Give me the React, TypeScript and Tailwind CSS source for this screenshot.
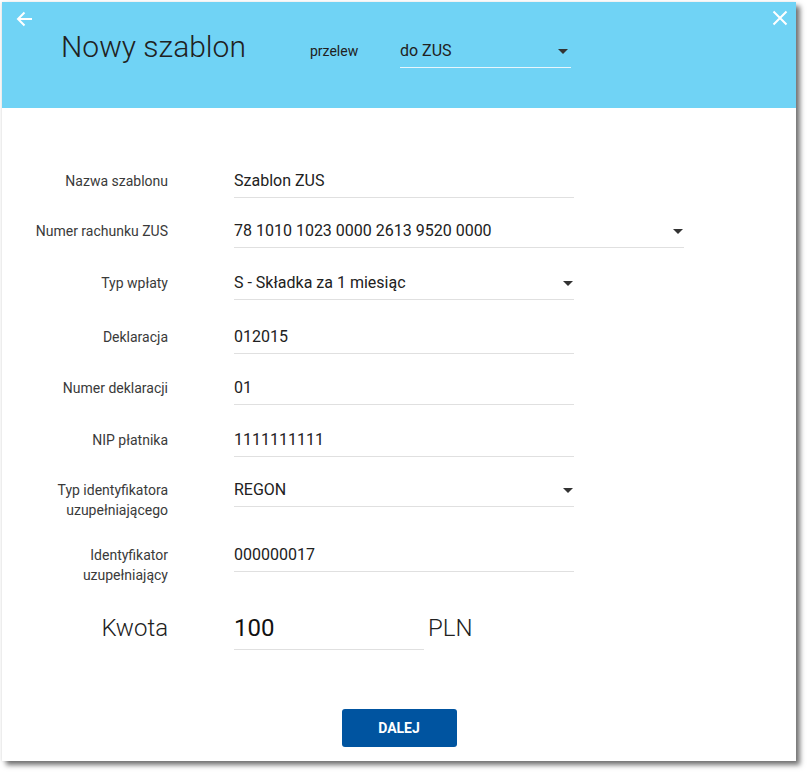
import React from "react";

type Row = {
  label: string[];
  value: string;
  select?: boolean;
  wide?: boolean;
  h: string;
};

// h = distance from this row's top to the next row's top
const rows: Row[] = [
  { label: ["Nazwa szablonu"], value: "Szablon ZUS", h: "h-[50px]" },
  {
    label: ["Numer rachunku ZUS"],
    value: "78 1010 1023 0000 2613 9520 0000",
    select: true,
    wide: true,
    h: "h-[52px]",
  },
  { label: ["Typ wpłaty"], value: "S - Składka za 1 miesiąc", select: true, h: "h-[54px]" },
  { label: ["Deklaracja"], value: "012015", h: "h-[51px]" },
  { label: ["Numer deklaracji"], value: "01", h: "h-[52px]" },
  { label: ["NIP płatnika"], value: "1111111111", h: "h-[50px]" },
  {
    label: ["Typ identyfikatora", "uzupełniającego"],
    value: "REGON",
    select: true,
    h: "h-[65px]",
  },
  {
    label: ["Identyfikator", "uzupełniający"],
    value: "000000017",
    h: "h-[68px]",
  },
];

const Caret = () => (
  <svg width="10" height="5" viewBox="0 0 10 5" className="shrink-0">
    <path d="M0 0 H10 L5 5 Z" fill="#333" />
  </svg>
);

const FormRow = ({ row }: { row: Row }) => (
  <div className={`flex items-start ${row.h}`}>
    <div className="w-[166px] text-right text-[14px] leading-[20px] text-[#3a3a3a]">
      {row.label.map((l) => (
        <div key={l}>{l}</div>
      ))}
    </div>
    <div
      className={`ml-[66px] flex items-center justify-between border-b border-[#e0e0e0] pb-[6px] ${
        row.wide ? "w-[450px]" : "w-[340px]"
      }`}
    >
      <span className="text-[16px] leading-[20px] text-[#212121]">{row.value}</span>
      {row.select && (
        <span className="mr-[1px]">
          <Caret />
        </span>
      )}
    </div>
  </div>
);

export default function App() {
  return (
    <div
      className="w-[810px] h-[775px] bg-white pt-[2px] pl-[2px]"
      style={{ fontFamily: "Roboto, 'Liberation Sans', sans-serif" }}
    >
      <div className="relative w-[794px] h-[759px] bg-white shadow-[4px_4px_5px_rgba(0,0,0,0.55),-1px_0_3px_rgba(0,0,0,0.08)]">
        {/* header */}
        <div className="relative h-[106px] bg-[#70d3f5]">
          <button className="absolute left-[14px] top-[9px]" aria-label="Wstecz">
            <svg width="17" height="16" viewBox="0 0 17 16" fill="none">
              <path
                d="M16 8 H2 M8.5 1.5 L2 8 L8.5 14.5"
                stroke="white"
                strokeWidth="2"
              />
            </svg>
          </button>
          <button className="absolute right-[8px] top-[8px]" aria-label="Zamknij">
            <svg width="16" height="16" viewBox="0 0 16 16" fill="none">
              <path d="M1.5 1.5 L14.5 14.5 M14.5 1.5 L1.5 14.5" stroke="white" strokeWidth="2" />
            </svg>
          </button>

          <div className="flex items-start pl-[59px]">
            <h1 className="w-[249px] mt-[27px] text-[30px] leading-[36px] font-light text-[#212121]">
              Nowy szablon
            </h1>
            <div className="w-[90px] mt-[39px] text-[14px] leading-[20px] text-[#212121]">przelew</div>
            <div className="mt-[39px] w-[171px] flex items-center justify-between border-b border-[#e8f6fc] pb-[6px]">
              <span className="text-[16px] leading-[20px] text-[#212121]">do ZUS</span>
              <span className="mr-[3px]">
                <Caret />
              </span>
            </div>
          </div>
        </div>

        {/* body */}
        <div className="pt-[63px]">
          {rows.map((r) => (
            <FormRow key={r.label.join(" ")} row={r} />
          ))}

          <div className="flex items-start">
            <div className="w-[166px] text-right text-[24px] leading-[30px] font-light text-[#212121]">
              Kwota
            </div>
            <div className="ml-[66px] w-[190px] border-b border-[#e0e0e0] pb-[6px]">
              <span className="text-[24px] leading-[30px] text-[#111]">100</span>
            </div>
            <div className="ml-[4px] text-[24px] leading-[30px] font-light text-[#212121]">PLN</div>
          </div>

          <div className="mt-[59px] flex justify-center">
            <button className="w-[115px] h-[38px] rounded-[3px] bg-[#0054a0] text-white text-[14px] font-bold">
              DALEJ
            </button>
          </div>
        </div>
      </div>
    </div>
  );
}
